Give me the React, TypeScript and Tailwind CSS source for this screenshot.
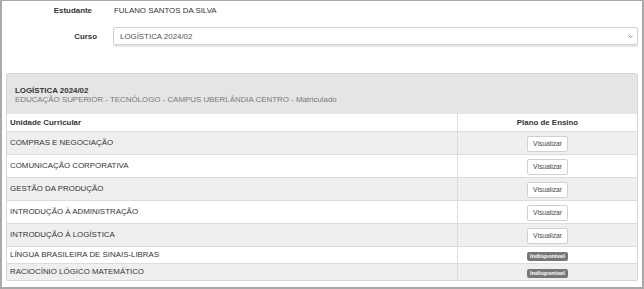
const ROWS: { name: string; plan: "ok" | "na" }[] = [
  { name: "COMPRAS E NEGOCIAÇÃO", plan: "ok" },
  { name: "COMUNICAÇÃO CORPORATIVA", plan: "ok" },
  { name: "GESTÃO DA PRODUÇÃO", plan: "ok" },
  { name: "INTRODUÇÃO À ADMINISTRAÇÃO", plan: "ok" },
  { name: "INTRODUÇÃO À LOGÍSTICA", plan: "ok" },
  { name: "LÍNGUA BRASILEIRA DE SINAIS-LIBRAS", plan: "na" },
  { name: "RACIOCÍNIO LÓGICO MATEMÁTICO", plan: "na" },
];

export default function App() {
  return (
    <div
      className="h-[289px] w-[644px] overflow-hidden border-x-2 border-b-2 border-t border-[#a9a9a9] bg-white text-[7.9px] leading-[9px] text-[#333]"
      style={{ fontFamily: '"Liberation Sans", Arial, sans-serif' }}
    >
      {/* student / course form */}
      <div className="flex h-[18px] items-center">
        <div className="w-[95px] pr-[5px] text-right font-bold">Estudante</div>
        <div className="pl-[17px]">FULANO SANTOS DA SILVA</div>
      </div>
      <div className="mt-[8px] flex h-[18px] items-center pr-[4px]">
        <div className="w-[95px] text-right font-bold">Curso</div>
        <div className="ml-[16px] flex h-[18px] flex-1 items-center justify-between rounded-[2px] border border-[#d0d0d0] pl-[6px] pr-[4px] text-[#555] shadow-[0_2px_0_#e4e4e4]">
          <span>LOGÍSTICA 2024/02</span>
          <svg width="5" height="3" viewBox="0 0 5 3" className="mt-[1px]">
            <path d="M0.5 0.5 L2.5 2.5 L4.5 0.5" fill="none" stroke="#888" strokeWidth="1" />
          </svg>
        </div>
      </div>

      {/* enrolment panel */}
      <div className="ml-[4px] mr-[4px] mt-[28px] overflow-hidden rounded-[2px] border border-[#d6d6d6]">
        <div className="h-[40px] bg-[#e5e5e5] pl-[8px] pt-[12px]">
          <div className="font-bold">LOGÍSTICA 2024/02</div>
          <div className="text-[#7a7a7a]">
            EDUCAÇÃO SUPERIOR - TECNÓLOGO - CAMPUS UBERLÂNDIA CENTRO - Matriculado
          </div>
        </div>
        <div className="flex h-[17px] bg-white font-bold">
          <div className="flex flex-1 items-center pl-[3px]">Unidade Curricular</div>
          <div className="flex w-[180px] items-center justify-center border-l border-[#dcdcdc]">
            Plano de Ensino
          </div>
        </div>
        {ROWS.map((r, i) => (
          <div
            key={r.name}
            className={`flex border-t border-[#dcdcdc] ${r.plan === "ok" ? "h-[23px]" : "h-[17px]"} ${
              i % 2 === 0 ? "bg-[#efefef]" : "bg-white"
            }`}
          >
            <div className="flex flex-1 items-center pb-[1px] pl-[3px]">{r.name}</div>
            <div className="flex w-[180px] items-center justify-center border-l border-[#dcdcdc]">
              {r.plan === "ok" ? (
                <button
                  type="button"
                  className="mt-[1px] h-[16px] rounded-[2px] border border-[#d0d0d0] bg-white px-[5px] text-[6.7px] leading-[8px] text-[#444]"
                >
                  Visualizar
                </button>
              ) : (
                <span className="mt-[2px] rounded-[2px] bg-[#777] px-[3px] text-[6px] font-bold leading-[9px] text-white">
                  Indisponível
                </span>
              )}
            </div>
          </div>
        ))}
      </div>
    </div>
  );
}
